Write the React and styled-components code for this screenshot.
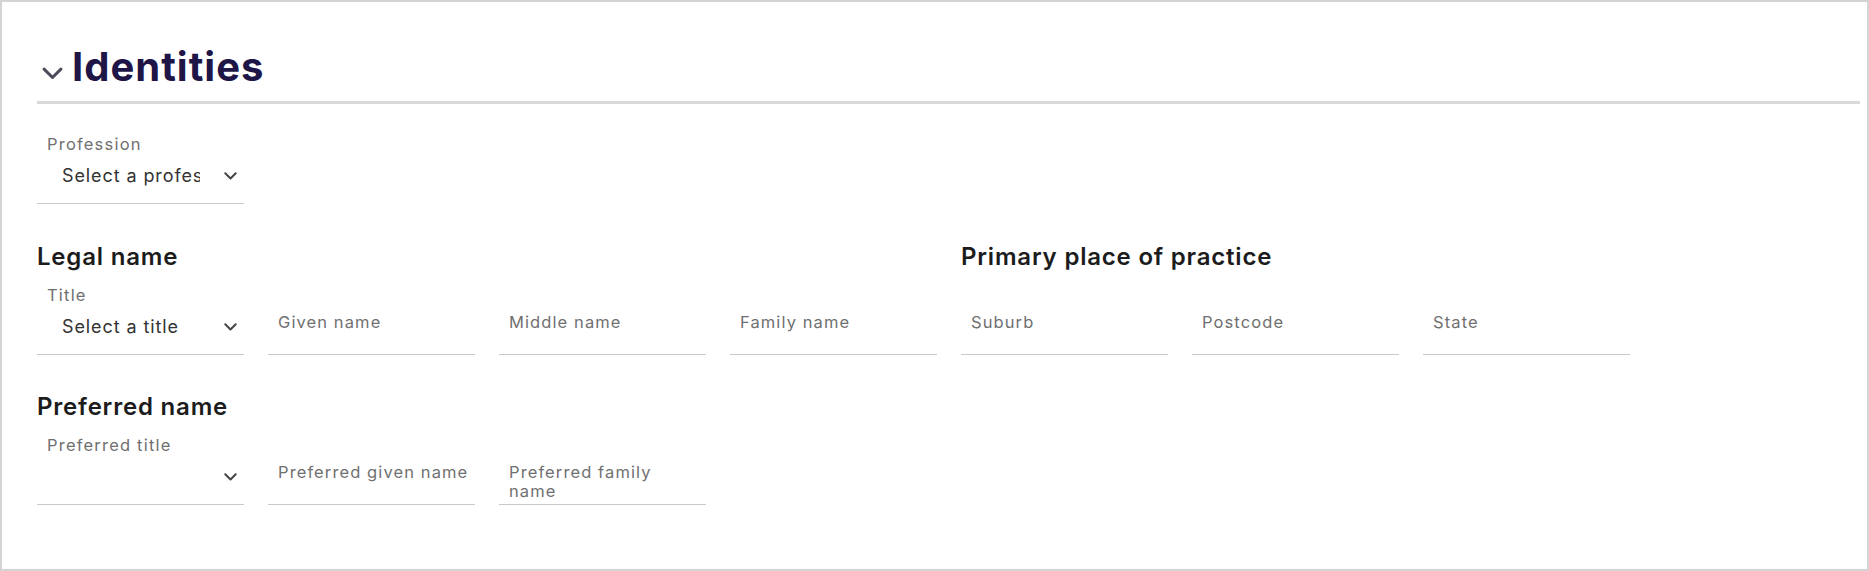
import styled, { createGlobalStyle } from "styled-components";

const GlobalStyle = createGlobalStyle`
  html, body {
    margin: 0;
    padding: 0;
    background: #ffffff;
  }
  body {
    font-family: 'Inter', 'Liberation Sans', sans-serif;
  }
`;

const Frame = styled.div`
  box-sizing: border-box;
  width: 1869px;
  height: 571px;
  border: 2px solid #d4d4d4;
  padding: 0 7px 0 35px;
  background: #fff;
`;

const Header = styled.div`
  display: flex;
  align-items: center;
  padding: 41px 0 10px;
  border-bottom: 3px solid #d9d9d9;
`;

const Toggle = styled.button`
  display: flex;
  align-items: center;
  justify-content: center;
  width: 30px;
  height: 30px;
  padding: 0;
  margin: 12px 5px 0 0;
  border: 0;
  background: none;
  color: #4b4b5a;
`;

const Title = styled.h2`
  margin: 0;
  font-size: 40px;
  line-height: 48px;
  font-weight: 700;
  color: #201547;
  letter-spacing: 1px;
`;

const Body = styled.div`
  display: flex;
  flex-direction: column;
`;

const Sections = styled.div`
  display: flex;
  gap: 24px;
`;

const Section = styled.section`
  display: flex;
  flex-direction: column;
  gap: 13px;
  margin-top: ${(p) => p.$top || 38}px;
`;

const SectionTitle = styled.h3`
  margin: 0;
  font-size: 24px;
  line-height: 30px;
  font-weight: 600;
  color: #1c1c1c;
  letter-spacing: 0.8px;
`;

const Row = styled.div`
  display: flex;
  flex: 1;
  align-items: flex-end;
  gap: 24px;
`;

const Field = styled.div`
  display: flex;
  flex-direction: column;
  width: 207px;
  box-sizing: border-box;
  border-bottom: 1px solid #c9c9c9;
`;

const Label = styled.label`
  padding-left: 10px;
  font-size: 16.5px;
  line-height: 20px;
  letter-spacing: 1.2px;
  color: #707070;
`;

const SelectBox = styled.div`
  display: flex;
  align-items: center;
  height: 49px;
  padding: 10px 7px 15px 25px;
  box-sizing: border-box;
  color: #333;
  font-size: 18px;
  line-height: 24px;
  letter-spacing: 0.9px;
`;

const SelectValue = styled.span`
  flex: 1;
  overflow: hidden;
  white-space: nowrap;
  text-overflow: clip;
  margin-right: 24px;
`;

const InputBox = styled.div`
  display: flex;
  align-items: flex-start;
  height: 49px;
  padding: 8px 2px 0 10px;
  box-sizing: border-box;
  font-size: 16.5px;
  line-height: 19px;
  letter-spacing: 1.1px;
  color: #707070;
`;

const ChevronWrap = styled.span`
  display: flex;
  color: #444;
`;

function Chevron({ size = 13, stroke = 2 }) {
  return (
    <svg width={size} height={size * 0.6} viewBox="0 0 20 12" fill="none">
      <path
        d="M2 2 L10 10 L18 2"
        stroke="currentColor"
        strokeWidth={stroke * (20 / size)}
        strokeLinecap="round"
        strokeLinejoin="round"
      />
    </svg>
  );
}

function SelectField({ label, value }) {
  return (
    <Field>
      <Label>{label}</Label>
      <SelectBox>
        <SelectValue>{value}</SelectValue>
        <ChevronWrap>
          <Chevron />
        </ChevronWrap>
      </SelectBox>
    </Field>
  );
}

function TextField({ placeholder }) {
  return (
    <Field>
      <InputBox>{placeholder}</InputBox>
    </Field>
  );
}

export default function App() {
  return (
    <>
      <GlobalStyle />
      <Frame>
        <Header>
          <Toggle aria-label="Collapse">
            <Chevron size={21} stroke={3} />
          </Toggle>
          <Title>Identities</Title>
        </Header>
        <Body>
          <Section $top={30}>
            <Row>
              <SelectField label="Profession" value="Select a profession" />
            </Row>
          </Section>
          <Sections>
            <Section>
              <SectionTitle>Legal name</SectionTitle>
              <Row>
                <SelectField label="Title" value="Select a title" />
                <TextField placeholder="Given name" />
                <TextField placeholder="Middle name" />
                <TextField placeholder="Family name" />
              </Row>
            </Section>
            <Section>
              <SectionTitle>Primary place of practice</SectionTitle>
              <Row>
                <TextField placeholder="Suburb" />
                <TextField placeholder="Postcode" />
                <TextField placeholder="State" />
              </Row>
            </Section>
          </Sections>
          <Section $top={37}>
            <SectionTitle>Preferred name</SectionTitle>
            <Row>
              <SelectField label="Preferred title" value="" />
              <TextField placeholder="Preferred given name" />
              <TextField placeholder="Preferred family name" />
            </Row>
          </Section>
        </Body>
      </Frame>
    </>
  );
}
